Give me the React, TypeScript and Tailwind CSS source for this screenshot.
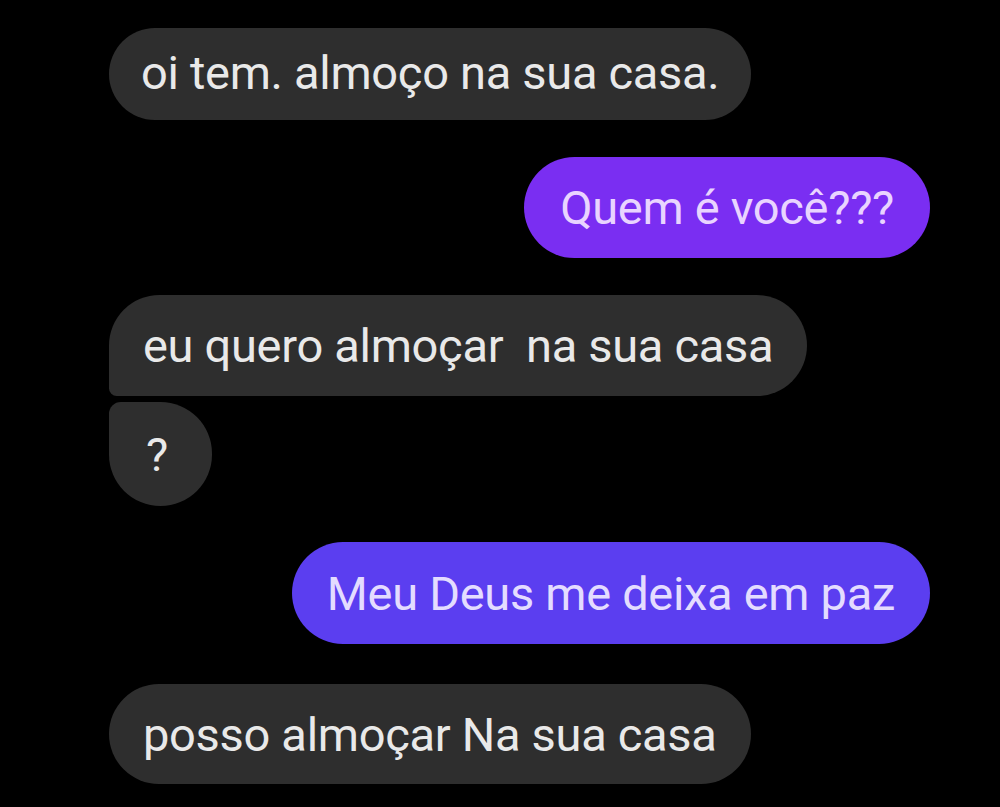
import React from "react";

const Bubble = ({
  text,
  side,
  tone,
  shape,
  size,
}: {
  text: string;
  side: "left" | "right";
  tone: "gray" | "violet" | "indigo";
  shape?: string;
  size?: string;
}) => {
  const bg =
    tone === "gray"
      ? "bg-[#2e2e2e] text-[#e9e9e9]"
      : tone === "violet"
      ? "bg-[#7a2ef2] text-[#e9d4ff]"
      : "bg-[#5b3ef0] text-[#e4dcff]";
  return (
    <div className={`flex ${side === "left" ? "justify-start" : "justify-end"}`}>
      <div
        className={`${bg} ${shape ?? "rounded-[52px]"} ${size ?? "h-[101px] px-[34px]"} flex items-center text-[47px] leading-none tracking-[-0.3px] whitespace-pre`}
      >
        {text}
      </div>
    </div>
  );
};

export default function App() {
  return (
    <div
      className="w-[1000px] h-[807px] bg-black overflow-hidden pl-[109px] pr-[70px] pt-[28px] flex flex-col"
      style={{ fontFamily: "Roboto, 'Liberation Sans', sans-serif" }}
    >
      <Bubble
        text="oi tem. almoço na sua casa."
        side="left"
        tone="gray"
        size="h-[92px] px-[32px] pb-[4px]"
        shape="rounded-[46px]"
      />
      <div className="h-[37px] shrink-0" />
      <Bubble text="Quem é você???" side="right" tone="violet" size="h-[101px] px-[36px]" />
      <div className="h-[37px] shrink-0" />
      <Bubble
        text="eu quero almoçar  na sua casa"
        side="left"
        tone="gray"
        shape="rounded-[52px] rounded-bl-[8px]"
      />
      <div className="h-[6px] shrink-0" />
      <Bubble
        text="?"
        side="left"
        tone="gray"
        size="h-[104px] w-[103px] pl-[37px]"
        shape="rounded-[52px] rounded-tl-[12px]"
      />
      <div className="h-[36px] shrink-0" />
      <Bubble text="Meu Deus me deixa em paz" side="right" tone="indigo" size="h-[102px] px-[35px]" />
      <div className="h-[40px] shrink-0" />
      <Bubble text="posso almoçar Na sua casa" side="left" tone="gray" size="h-[100px] px-[34px]" />
    </div>
  );
}
